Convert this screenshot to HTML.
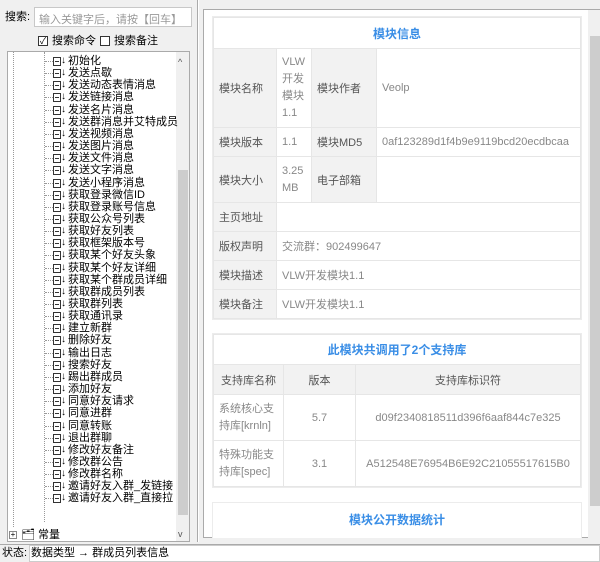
<!DOCTYPE html>
<html><head><meta charset="utf-8"><style>
*{margin:0;padding:0;box-sizing:border-box}
body{width:600px;height:562px;overflow:hidden;background:#f0f0f0;font-family:"Liberation Sans","Noto Sans CJK SC",sans-serif;position:relative}
.a{position:absolute}
.t{font-size:11px;color:#000;white-space:nowrap;line-height:12px}
.card{position:absolute;left:212px;width:370px;background:#fff;border:1px solid #ececec}
.card table{border-collapse:collapse;width:100%;font-size:11px;color:#888}
.card td{border:1px solid #e6e6e6;padding:0 5px}
.card td.l{background:#f2f2f2;color:#555}
.hd{text-align:center;color:#3a8ee6;font-weight:bold;font-size:12px}
.ic{position:absolute;width:8px;height:9px;border:1px solid #333;background:#fff}
.ic:after{content:"";position:absolute;left:1px;top:3px;width:4px;border-top:1px solid #333}
.ar{position:absolute;font-size:10px;line-height:12px;font-weight:bold}
</style></head><body>
<div class="a t" style="left:5px;top:11px">搜索:</div>
<div class="a" style="left:34px;top:7px;width:158px;height:20px;background:#fff;border:1px solid #c8c8c8;font-size:11px;color:#999;padding:3px 4px;white-space:nowrap">输入关键字后，请按【回车】</div>
<div class="a" style="left:38px;top:36px;width:10px;height:10px;border:1px solid #333;background:#fff;font-size:9px;line-height:8px;text-align:center">✓</div>
<div class="a t" style="left:52px;top:35px">搜索命令</div>
<div class="a" style="left:100px;top:36px;width:10px;height:10px;border:1px solid #333;background:#fff"></div>
<div class="a t" style="left:114px;top:35px">搜索备注</div>
<div class="a" style="left:7px;top:51px;width:183px;height:491px;background:#fff;border:1px solid #aaa"></div>
<div class="a" style="left:13px;top:52px;height:475px;border-left:1px dotted #999"></div>
<div class="a" style="left:44px;top:52px;height:470px;border-left:1px dotted #999"></div>
<div class="a" style="left:176px;top:52px;width:13px;height:489px;background:#f0f0f0"></div>
<div class="a" style="left:178px;top:170px;width:10px;height:345px;background:#cdcdcd"></div>
<div class="a t" style="left:178px;top:56px;font-size:9px;color:#555">^</div>
<div class="a t" style="left:178px;top:528px;font-size:9px;color:#555">v</div>
<div id="tree"></div>
<div class="a" style="left:9px;top:531px;width:8px;height:8px;border:1px solid #888;font-size:8px;line-height:6px;text-align:center;background:#fff">+</div>
<div class="a t" style="left:21px;top:529px">🗂 常量</div>
<div class="a" style="left:0;top:544px;width:600px;height:18px;background:#f0f0f0;border-top:1px solid #aaa"></div>
<div class="a t" style="left:2px;top:547px">状态:</div>
<div class="a" style="left:29px;top:545px;width:571px;height:17px;background:#fff;border:1px solid #ccc"></div>
<div class="a t" style="left:31px;top:547px">数据类型 → 群成员列表信息</div>
<div class="a" style="left:197px;top:0;width:2px;height:542px;border-left:1px solid #aaa;border-right:1px solid #fff"></div>
<div class="a" style="left:203px;top:9px;width:397px;height:529px;background:#fff;border:1px solid #aaa"></div>
<div class="a" style="left:588px;top:10px;width:12px;height:528px;background:#f0f0f0"></div>
<div class="a" style="left:590px;top:36px;width:10px;height:470px;background:#cdcdcd"></div>
<div class="card" style="top:16px">
<table>
<tr><td colspan="4" class="hd" style="height:31px">模块信息</td></tr>
<tr style="height:79px"><td class="l" style="width:63px">模块名称</td><td style="width:35px;line-height:17px">VLW开发模块1.1</td><td class="l" style="width:65px">模块作者</td><td>Veolp</td></tr>
<tr style="height:29px"><td class="l">模块版本</td><td>1.1</td><td class="l">模块MD5</td><td>0af123289d1f4b9e9119bcd20ecdbcaa</td></tr>
<tr style="height:46px"><td class="l">模块大小</td><td style="line-height:17px">3.25 MB</td><td class="l">电子部箱</td><td></td></tr>
<tr style="height:29px"><td class="l">主页地址</td><td colspan="3"></td></tr>
<tr style="height:29px"><td class="l">版权声明</td><td colspan="3">交流群：902499647</td></tr>
<tr style="height:29px"><td class="l">模块描述</td><td colspan="3">VLW开发模块1.1</td></tr>
<tr style="height:29px"><td class="l">模块备注</td><td colspan="3">VLW开发模块1.1</td></tr>
</table></div>
<div class="card" style="top:333px">
<table style="text-align:center">
<tr><td colspan="3" class="hd" style="height:30px">此模块共调用了2个支持库</td></tr>
<tr style="height:30px"><td class="l" style="width:70px">支持库名称</td><td class="l" style="width:72px">版本</td><td class="l">支持库标识符</td></tr>
<tr style="height:46px"><td style="line-height:17px;text-align:left">系统核心支持库[krnln]</td><td>5.7</td><td>d09f2340818511d396f6aaf844c7e325</td></tr>
<tr style="height:46px"><td style="line-height:17px;text-align:left">特殊功能支持库[spec]</td><td>3.1</td><td>A512548E76954B6E92C21055517615B0</td></tr>
</table></div>
<div class="card" style="top:502px;height:36px;border-bottom:none">
<div class="hd" style="padding-top:8px">模块公开数据统计</div></div>
<script>
var items="初始化,发送点歇,发送动态表情消息,发送链接消息,发送名片消息,发送群消息并艾特成员,发送视频消息,发送图片消息,发送文件消息,发送文字消息,发送小程序消息,获取登录微信ID,获取登录账号信息,获取公众号列表,获取好友列表,获取框架版本号,获取某个好友头象,获取某个好友详细,获取某个群成员详细,获取群成员列表,获取群列表,获取通讯录,建立新群,删除好友,输出日志,搜索好友,踢出群成员,添加好友,同意好友请求,同意进群,同意转账,退出群聊,修改好友备注,修改群公告,修改群名称,邀请好友入群_发链接,邀请好友入群_直接拉".split(",");
var h="";items.forEach(function(s,i){var y=55+i*12.15;
h+='<div class="a" style="left:45px;top:'+(y+6)+'px;width:8px;border-top:1px dotted #999"></div><div class="ic" style="left:53px;top:'+(y+2)+'px"></div><div class="ar" style="left:61px;top:'+y+'px">↓</div><div class="a t" style="left:68px;top:'+y+'px">'+s+'</div>';});
document.getElementById("tree").innerHTML=h;
</script>
</body></html>
